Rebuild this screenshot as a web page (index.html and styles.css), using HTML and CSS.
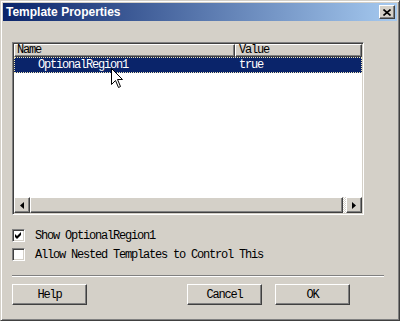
FILE: index.html
```html
<!DOCTYPE html>
<html lang="en">
<head>
    <meta charset="UTF-8">
    <title>Template Properties</title>
    <link rel="stylesheet" href="styles.css">
</head>
<body>
    <div class="window">
        <div class="titlebar">
            <span class="title">Template Properties</span>
            <button class="close" title="Close">
                <svg width="8" height="7" viewBox="0 0 8 7"><path d="M0.5 0.5 L7.5 6.5 M7.5 0.5 L0.5 6.5" stroke="#000" stroke-width="1.6"/></svg>
            </button>
        </div>

        <div class="content">
            <div class="listview">
                <div class="list-head">
                    <div class="col col-name">Name</div>
                    <div class="col col-value">Value</div>
                </div>
                <div class="list-rows">
                    <div class="row selected">
                        <span class="cell cell-name">OptionalRegion1</span>
                        <span class="cell cell-value">true</span>
                    </div>
                </div>
                <div class="hscroll">
                    <div class="sb-btn">
                        <svg width="4" height="7" viewBox="0 0 4 7"><path d="M4 0 L0 3.5 L4 7 Z" fill="#000"/></svg>
                    </div>
                    <div class="sb-thumb"></div>
                    <div class="sb-track"></div>
                    <div class="sb-btn">
                        <svg width="4" height="7" viewBox="0 0 4 7"><path d="M0 0 L4 3.5 L0 7 Z" fill="#000"/></svg>
                    </div>
                </div>
            </div>

            <label class="check first">
                <span class="box">
                    <svg width="7" height="7" viewBox="0 0 7 7"><path d="M0 2 L2 4 L6 0 L6 3 L2 7 L0 5 Z" fill="#000"/></svg>
                </span>
                <span>Show OptionalRegion1</span>
            </label>
            <label class="check">
                <span class="box"></span>
                <span>Allow Nested Templates to Control This</span>
            </label>

            <div class="sep"></div>

            <div class="buttons">
                <button class="btn">Help</button>
                <button class="btn btn-cancel">Cancel</button>
                <button class="btn btn-ok">OK</button>
            </div>
        </div>

        <svg class="cursor" width="13" height="21" viewBox="0 0 13 21">
            <path d="M0.5 0.5 L0.5 16.5 L4.5 12.5 L7.5 19.5 L9.5 18.5 L6.5 11.5 L11.5 11.5 Z" fill="#fff" stroke="#000" stroke-width="1"/>
        </svg>
    </div>
</body>
</html>
```

FILE: styles.css
```css
* {
    box-sizing: border-box;
}
body {
    margin: 0;
    background: #d4d0c8;
    font-family: "Liberation Mono", monospace;
    font-size: 12px;
    letter-spacing: -1.2px;
    color: #000;
}
.window {
    position: relative;
    width: 400px;
    height: 321px;
    background: #d4d0c8;
    border: 1px solid;
    border-color: #d4d0c8 #404040 #404040 #d4d0c8;
    box-shadow: inset 1px 1px #fff, inset -1px -1px #808080;
    padding: 2px;
}
.titlebar {
    height: 18px;
    display: flex;
    align-items: center;
    padding: 0 2px 0 3px;
    background: linear-gradient(to right, #0a246a, #a6caf0);
}
.title {
    flex: 1;
    color: #fff;
    font: bold 12px "Liberation Sans", sans-serif;
    letter-spacing: 0;
}
.close, .btn, .col, .sb-btn, .sb-thumb {
    background: #d4d0c8;
    border: 1px solid;
    border-color: #fff #404040 #404040 #fff;
    box-shadow: inset -1px -1px #808080;
}
.close {
    width: 16px;
    height: 14px;
    padding: 0;
    display: flex;
    align-items: center;
    justify-content: center;
}
.content {
    padding: 21px 0 0 9px;
}
.listview {
    width: 352px;
    height: 173px;
    display: flex;
    flex-direction: column;
    border: 1px solid;
    border-color: #808080 #fff #fff #808080;
    box-shadow: inset 1px 1px #404040, inset -1px -1px #d4d0c8;
    padding: 1px;
    background: #fff;
}
.list-head {
    display: flex;
    height: 13px;
}
.col {
    height: 13px;
    line-height: 11px;
    padding-left: 2px;
}
.col-name {
    width: 221px;
}
.col-value {
    flex: 1;
    padding-left: 3px;
}
.list-rows {
    flex: 1;
}
.row {
    display: flex;
    height: 16px;
    line-height: 14px;
}
.row.selected {
    background: #0a246a;
    color: #fff;
    border: 1px dotted #f0e6b8;
}
.cell-name {
    width: 220px;
    padding-left: 23px;
}
.cell-value {
    padding-left: 4px;
}
.hscroll {
    display: flex;
    height: 16px;
}
.sb-btn {
    width: 16px;
    display: flex;
    align-items: center;
    justify-content: center;
}
.sb-thumb {
    flex: 1;
}
.sb-track {
    width: 3px;
    background: repeating-conic-gradient(#fff 0 25%, #d4d0c8 0 50%) 0 0 / 2px 2px;
}
.check {
    display: flex;
    align-items: center;
    gap: 10px;
    height: 13px;
    margin-top: 6px;
}
.check.first {
    margin-top: 14px;
}
.box {
    width: 13px;
    height: 13px;
    flex: none;
    display: flex;
    align-items: center;
    justify-content: center;
    background: #fff;
    border: 1px solid;
    border-color: #808080 #fff #fff #808080;
    box-shadow: inset 1px 1px #404040, inset -1px -1px #d4d0c8;
}
.sep {
    width: 372px;
    height: 2px;
    margin-top: 14px;
    border-top: 1px solid #808080;
    border-bottom: 1px solid #fff;
}
.buttons {
    display: flex;
    margin-top: 7px;
}
.btn {
    width: 75px;
    height: 21px;
    padding: 0;
    font: inherit;
    letter-spacing: inherit;
    color: #000;
}
.btn-cancel {
    margin-left: 100px;
}
.btn-ok {
    margin-left: 13px;
}
.cursor {
    position: absolute;
    left: 110px;
    top: 67px;
}
```
